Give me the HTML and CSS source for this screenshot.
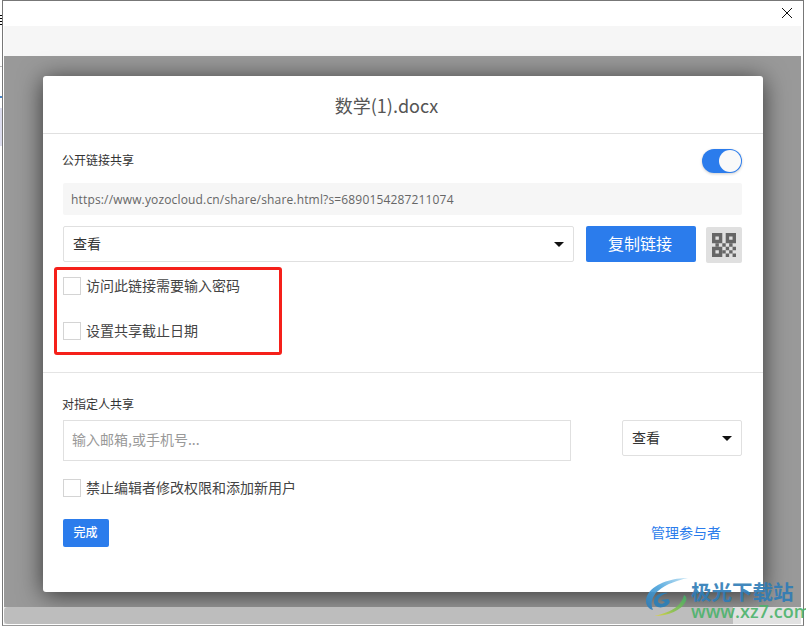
FILE: index.html
```html
<!DOCTYPE html>
<html lang="zh-CN">
<head>
    <meta charset="UTF-8">
    <title>数学(1).docx</title>
    <link rel="stylesheet" href="styles.css">
</head>
<body>
    <div class="edge-bits">
        <span class="bit bit-menu"></span>
        <span class="bit bit-line"></span>
        <span class="bit bit-blue"></span>
        <span class="bit bit-pale"></span>
    </div>
    <div class="window">
        <div class="title-bar">
            <svg class="close-icon" width="12" height="12" viewBox="0 0 12 12">
                <path d="M1 1L11 11M11 1L1 11" stroke="#111" stroke-width="1" fill="none"/>
            </svg>
        </div>
        <div class="tool-bar"></div>
        <div class="overlay">
            <div class="dialog">
                <div class="dialog-title">数学(1).docx</div>
                <div class="section section-public">
                    <div class="row-between">
                        <span class="label">公开链接共享</span>
                        <span class="toggle"><span class="knob"></span></span>
                    </div>
                    <div class="url-box">https://www.yozocloud.cn/share/share.html?s=6890154287211074</div>
                    <div class="link-row">
                        <div class="select select-wide"><span class="select-text">查看</span><span class="caret"></span></div>
                        <button class="btn-copy">复制链接</button>
                        <span class="qr-btn">
                            <svg width="24" height="24" viewBox="0 0 7 7" fill="#666">
                                <path d="M0 0h3v3H0zM1 1v1h1V1zM4 0h3v3H4zM5 1v1h1V1z" fill-rule="evenodd"/>
                                <path d="M0 4h3v3H0zM1 5v1h1V5z" fill-rule="evenodd"/>
                                <path d="M1 3h1v1H1zM3 3h1v1H3zM5 3h1v1H5zM4 4h1v1H4zM6 4h1v1H6zM3 5h1v1H3zM5 5h1v1H5zM4 6h1v1H4zM6 6h1v1H6z"/>
                            </svg>
                        </span>
                    </div>
                    <div class="highlight">
                        <label class="check-row"><input type="checkbox"><span>访问此链接需要输入密码</span></label>
                        <label class="check-row"><input type="checkbox"><span>设置共享截止日期</span></label>
                    </div>
                </div>
                <div class="section section-people">
                    <div class="label label-people">对指定人共享</div>
                    <div class="invite-row">
                        <input class="invite-input" type="text" placeholder="输入邮箱,或手机号...">
                        <div class="select select-small"><span class="select-text">查看</span><span class="caret"></span></div>
                    </div>
                    <label class="check-row check-row-last"><input type="checkbox"><span>禁止编辑者修改权限和添加新用户</span></label>
                    <div class="footer-row">
                        <button class="btn-done">完成</button>
                        <a class="manage-link">管理参与者</a>
                    </div>
                </div>
            </div>
        </div>
        <div class="scroll-track"><div class="scroll-thumb"></div></div>
    </div>
    <div class="cut-text">择个公开并设费删赋写查使用，截六软件将你带到</div>

    <div class="watermark">
        <svg class="wm-logo" width="50" height="44" viewBox="0 0 50 44">
            <defs>
                <linearGradient id="tail" x1="1" y1="0" x2="0" y2="1">
                    <stop offset="0" stop-color="#3fae6a"/>
                    <stop offset="0.6" stop-color="#8cc24c"/>
                    <stop offset="1" stop-color="#e4d83c"/>
                </linearGradient>
                <linearGradient id="arc" x1="1" y1="0" x2="0" y2="1">
                    <stop offset="0" stop-color="#bfe3f5"/>
                    <stop offset="0.5" stop-color="#4aa3dc"/>
                    <stop offset="1" stop-color="#2a78b4"/>
                </linearGradient>
            </defs>
            <path d="M44 2C30 2 12 6 4 18C0 25 2 32 9 34C6 28 8 20 14 15C22 8 34 4 44 2Z" fill="url(#arc)"/>
            <path d="M24 17C16 16 10 20 10 26C10 31 16 33 22 30C26 28 27 25 24 23L17 24L21 26C19 29 14 28 14 25C14 21 19 18 24 17Z" fill="#2a7fb8"/>
            <path d="M40 19C38 28 30 36 10 40C24 40 38 34 42 25C43 22 42 20 40 19Z" fill="url(#tail)"/>
        </svg>
        <div class="wm-text">
            <div class="wm-name">极光下载站</div>
            <div class="wm-url">www.xz7.com</div>
        </div>
    </div>
</body>
</html>
```

FILE: styles.css
```css
* {
    box-sizing: border-box;
}

html, body {
    height: 629px;
}

body {
    margin: 0;
    background-color: #fff;
    font-family: "Noto Sans CJK SC", "Open Sans", sans-serif;
    color: #333;
    overflow: hidden;
    position: relative;
}

/* scraps of the app behind the window */
.bit {
    position: absolute;
    left: 0;
    width: 2px;
}

.bit-menu {
    top: 15px;
    height: 11px;
    background: repeating-linear-gradient(#000 0, #000 1px, #fff 1px, #fff 3px);
}

.bit-line {
    top: 66px;
    height: 1px;
    background-color: #bbb;
}

.bit-blue {
    top: 96px;
    height: 2px;
    background-color: #4a86c8;
}

.bit-pale {
    top: 108px;
    height: 38px;
    background-color: #dde;
}

.window {
    width: 802px;
    height: 626px;
    margin-left: 2px;
    padding: 0 2px 1px 1px;
    border: 1px solid #777;
    border-bottom-color: #999;
    background-color: #fff;
    display: flex;
    flex-direction: column;
}

.title-bar {
    height: 25px;
    flex: none;
    display: flex;
    justify-content: flex-end;
    align-items: flex-start;
    padding: 6px 8px 0 0;
}

.tool-bar {
    height: 30px;
    flex: none;
    background-color: #f6f6f6;
}

.overlay {
    height: 551px;
    flex: none;
    padding: 20px 0 0 39px;
    background-color: #999;
}

.dialog {
    width: 720px;
    height: 516px;
    background-color: #fff;
    border-radius: 3px;
    box-shadow: 0 3px 24px rgba(0, 0, 0, 0.65);
}

.dialog-title {
    height: 58px;
    padding: 14px 33px 0 0;
    border-bottom: 1px solid #e0e0e0;
    text-align: center;
    font-size: 18px;
    line-height: 30px;
    color: #555;
}

.section {
    padding: 0 21px 0 20px;
}

.section-public {
    padding-top: 15px;
    padding-bottom: 17px;
    border-bottom: 1px solid #e4e4e4;
}

.section-people {
    padding-top: 22px;
}

.row-between {
    display: flex;
    justify-content: space-between;
    align-items: center;
}

.label {
    font-size: 12px;
    line-height: 18px;
    margin-left: -1px;
    padding-bottom: 2px;
    color: #333;
}

.label-people {
    height: 18px;
    line-height: 18px;
    padding-bottom: 0;
}

.toggle {
    width: 40px;
    height: 24px;
    padding: 1px;
    border-radius: 12px;
    background-color: #2b7cec;
    display: flex;
    justify-content: flex-end;
    box-shadow: 0 1px 3px rgba(0, 0, 0, 0.2);
}

.knob {
    width: 22px;
    height: 22px;
    border-radius: 50%;
    background-color: #f9f9f9;
}

.url-box {
    height: 32px;
    margin-top: 10px;
    padding: 1px 0 0 8px;
    background-color: #f6f6f6;
    border-radius: 2px;
    font-family: "Open Sans", sans-serif;
    font-size: 12px;
    letter-spacing: 0.16px;
    line-height: 32px;
    color: #666;
}

.link-row {
    display: flex;
    align-items: flex-start;
    margin-top: 11px;
}

.select {
    height: 36px;
    padding: 0 9px;
    border: 1px solid #e0e0e0;
    border-radius: 2px;
    font-size: 14px;
    display: flex;
    justify-content: space-between;
    align-items: center;
}

.select-text {
    line-height: 18px;
    padding-bottom: 2px;
}

.select-wide {
    width: 511px;
}

.select-small {
    width: 120px;
}

.caret {
    width: 0;
    height: 0;
    border-left: 5px solid transparent;
    border-right: 5px solid transparent;
    border-top: 5px solid #111;
}

.btn-copy {
    width: 110px;
    height: 36px;
    margin-left: 12px;
    border: none;
    border-radius: 2px;
    background-color: #2b7cec;
    color: #fff;
    font-family: inherit;
    font-size: 16px;
    padding: 0 2px 2px 0;
}

.qr-btn {
    width: 36px;
    height: 36px;
    margin: 1px 0 -1px 10px;
    border-radius: 2px;
    background-color: #e0e0e0;
    display: flex;
    align-items: center;
    justify-content: center;
}

.highlight {
    width: 228px;
    height: 88px;
    margin: 5px 0 0 -9px;
    padding: 7px 0 0 6px;
    border: 3px solid #f5201a;
    border-radius: 3px;
    display: flex;
    flex-direction: column;
    gap: 27px;
}

.check-row {
    display: flex;
    align-items: center;
    height: 18px;
    font-size: 14px;
    line-height: 18px;
    color: #444;
}

.check-row span {
    padding-bottom: 3px;
}

.check-row input {
    appearance: none;
    width: 18px;
    height: 18px;
    margin: 0 5px 0 0;
    border: 1px solid #d4d4d4;
    background-color: #fff;
}

.check-row-last {
    margin-top: 18px;
}

.invite-row {
    display: flex;
    justify-content: space-between;
    align-items: flex-start;
    margin-top: 7px;
}

.invite-input {
    width: 508px;
    height: 41px;
    padding: 0 8px 4px;
    border: 1px solid #e0e0e0;
    font-family: inherit;
    font-size: 14px;
    outline: none;
}

.invite-input::placeholder {
    color: #999;
}

.footer-row {
    display: flex;
    justify-content: space-between;
    align-items: center;
    margin-top: 22px;
    padding-right: 21px;
}

.btn-done {
    width: 46px;
    height: 28px;
    padding: 0 1px 3px 0;
    border: none;
    border-radius: 2px;
    background-color: #2b7cec;
    color: #fff;
    font-family: inherit;
    font-size: 12px;
    font-weight: 500;
}

.manage-link {
    font-size: 14px;
    line-height: 18px;
    padding-bottom: 2px;
    color: #2b7cec;
}

.scroll-track {
    height: 17px;
    flex: none;
    background-color: #e2e2e2;
}

.scroll-thumb {
    width: 729px;
    height: 17px;
    border-radius: 4px 0 0 4px;
    background-color: #bdbdbd;
}

.cut-text {
    height: 3px;
    padding-left: 108px;
    overflow: hidden;
    font-size: 22px;
    line-height: 26px;
    color: #222;
    white-space: nowrap;
}

.watermark {
    position: absolute;
    left: 644px;
    top: 576px;
    display: flex;
    opacity: 0.9;
}

.wm-text {
    margin: 4px 0 0 -3px;
}

.wm-name {
    font-size: 20.500px;
    font-weight: 700;
    line-height: 22px;
    color: #2e7cb6;
    white-space: nowrap;
}

.wm-url {
    font-family: "Open Sans", sans-serif;
    font-size: 18px;
    font-weight: 600;
    line-height: 18px;
    color: #4bb36b;
    white-space: nowrap;
}
```
